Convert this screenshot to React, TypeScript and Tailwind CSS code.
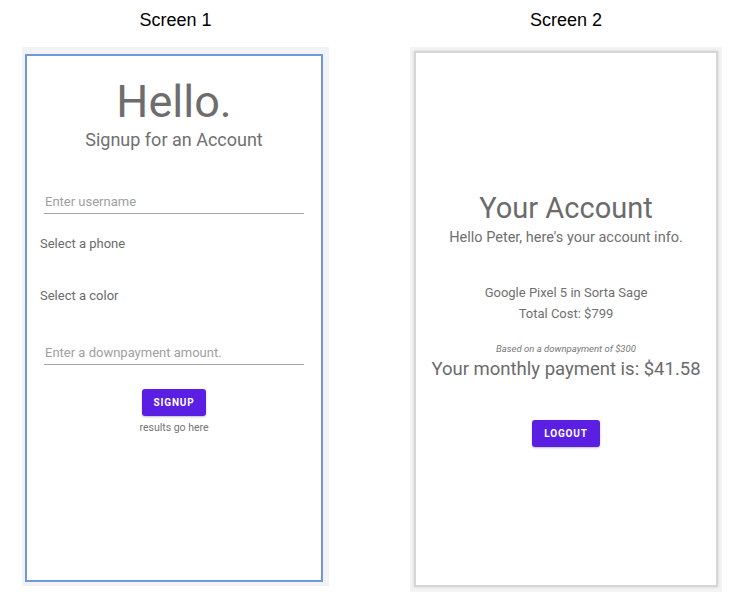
import React from 'react';

const roboto = { fontFamily: 'Roboto, "Liberation Sans", sans-serif' };

function Underline({ placeholder }: { placeholder: string }) {
  return (
    <div className="mx-[17px] border-b-[1.5px] border-[#a3a3a3]">
      <span className="text-[13px] text-[#a0a0a0] leading-[18px] pl-[1px]">{placeholder}</span>
    </div>
  );
}

function ScreenOne() {
  return (
    <div className="w-[307px] h-[539px] bg-[#f1f3f6] pl-[3px] pt-[7px] pr-[6px] pb-[4px]">
      <div className="h-[528px] bg-white border-2 border-[#7098dc] flex flex-col" style={roboto}>
        <h1 className="text-center text-[45px] leading-[45px] text-[#6d6d6d] mt-[23px]">Hello.</h1>
        <p className="text-center text-[18px] leading-[22px] text-[#707070] mt-[5px]">Signup for an Account</p>
        <div className="mt-[38px]">
          <Underline placeholder="Enter username" />
        </div>
        <p className="text-[13px] leading-[18px] text-[#6b6b6b] ml-[13px] mt-[21px]">Select a phone</p>
        <p className="text-[13px] leading-[18px] text-[#6b6b6b] ml-[13px] mt-[34px]">Select a color</p>
        <div className="mt-[35px]">
          <Underline placeholder="Enter a downpayment amount." />
        </div>
        <div className="flex flex-col items-center mt-[24px]">
          <button className="w-[64px] h-[27px] rounded-[3px] bg-[#5b1fe3] text-white text-[10px] font-bold tracking-[0.8px] shadow-[0_1px_2px_rgba(0,0,0,0.25)]">
            SIGNUP
          </button>
          <p className="text-[10.5px] leading-[14px] text-[#757575] mt-[5px]">results go here</p>
        </div>
      </div>
    </div>
  );
}

function ScreenTwo() {
  return (
    <div className="w-[312px] h-[545px] bg-[#f4f4f4] pl-[4px] pt-[4px] pr-[4px] pb-[5px]">
      <div className="h-[536px] bg-white border-[2px] border-[#d6d6d6] shadow-[0_0_3px_rgba(0,0,0,0.15)] flex flex-col items-center" style={roboto}>
        <h2 className="text-[29px] leading-[34px] text-[#6b6b6b] mt-[138px]">Your Account</h2>
        <p className="text-[14.5px] leading-[18px] text-[#6f6f6f] mt-[4px]">Hello Peter, here's your account info.</p>
        <p className="text-[13px] leading-[20px] text-[#707070] mt-[36px]">Google Pixel 5 in Sorta Sage</p>
        <p className="text-[13px] leading-[20px] text-[#707070] mt-[1px]">Total Cost: $799</p>
        <p className="text-[9.5px] leading-[14px] italic text-[#777] mt-[18px]">Based on a downpayment of $300</p>
        <p className="text-[18.5px] leading-[22px] text-[#6b6b6b] mt-[2px]">Your monthly payment is: $41.58</p>
        <button className="w-[68px] h-[27px] rounded-[3px] bg-[#5b1fe3] text-white text-[10px] font-bold tracking-[0.8px] mt-[40px] shadow-[0_1px_2px_rgba(0,0,0,0.25)]">
          LOGOUT
        </button>
      </div>
    </div>
  );
}

export default function App() {
  return (
    <div className="w-[744px] h-[605px] bg-white flex pl-[22px] gap-[81px]">
      <div className="flex flex-col items-center">
        <p className="text-[18px] leading-[20px] text-black mt-[10px] mb-[17px]" style={{ fontFamily: '"Liberation Sans", Arial, sans-serif' }}>Screen 1</p>
        <ScreenOne />
      </div>
      <div className="flex flex-col items-center">
        <p className="text-[18px] leading-[20px] text-black mt-[10px] mb-[17px]" style={{ fontFamily: '"Liberation Sans", Arial, sans-serif' }}>Screen 2</p>
        <ScreenTwo />
      </div>
    </div>
  );
}
